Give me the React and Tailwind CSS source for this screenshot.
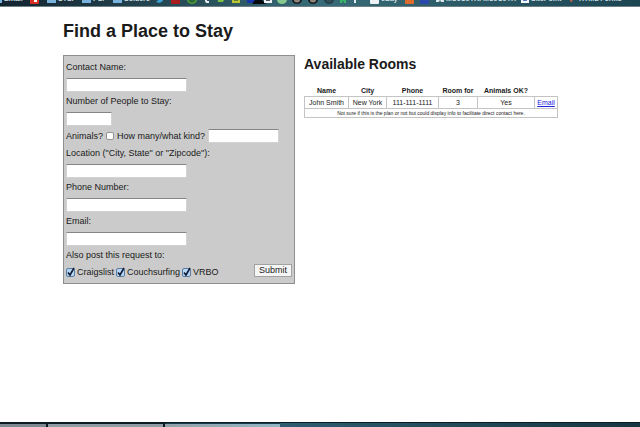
import React from 'react'

const Folder = () => (
    <svg viewBox="0 0 9 8" className="w-[9px] h-[8px] shrink-0">
        <path d="M0 1h3l1 1h5v6H0z" fill="#8fc4e8" />
        <path d="M0 3h9v5H0z" fill="#78b2dd" />
    </svg>
)

const Square = ({ color }) => (
    <svg viewBox="0 0 9 9" className="w-[9px] h-[9px] shrink-0">
        <rect width="9" height="9" rx="1" fill={color} />
    </svg>
)

const Frame = ({ color, inner }) => (
    <svg viewBox="0 0 8 8" className="w-[8px] h-[8px] shrink-0">
        <rect width="8" height="8" fill={color} />
        <path d="M2 2h4v4H2z" fill={inner} />
    </svg>
)

const Face = ({ color, inner }) => (
    <svg viewBox="0 0 10 9" className="w-[10px] h-[9px] shrink-0">
        <ellipse cx="5" cy="4.5" rx="5" ry="4.5" fill={color} />
        <ellipse cx="5" cy="5" rx="3" ry="2.5" fill={inner} />
    </svg>
)

const Glyph = ({ d, color }) => (
    <svg viewBox="0 0 8 8" className="w-[8px] h-[8px] shrink-0">
        <path d={d} fill={color} />
    </svg>
)

const bookmarks = [
    { icon: <Folder />, text: 'Email', width: 'w-[37px]' },
    {
        icon: (
            <svg viewBox="0 0 9 9" className="w-[9px] h-[9px] shrink-0">
                <rect width="9" height="9" rx="1" fill="#d92f22" />
                <path d="M2 1h3v4h2v2H4V5H2z" fill="#fff" />
            </svg>
        ),
        width: 'w-[17px]',
    },
    { icon: <Folder />, text: 'STSF', width: 'w-[35px]' },
    { icon: <Folder />, text: 'PSI', width: 'w-[31px]' },
    { icon: <Folder />, text: 'Soldero', width: 'w-[43px]' },
    { icon: <Glyph color="#3aa5dc" d="M0 6c2 0 3-1 2-2L1 1l3 2c0-3 3-3 4-1L7 5c-1 3-5 4-7 1z" />, width: 'w-[15px]' },
    { icon: <Square color="#a81c20" />, width: 'w-[16px]' },
    { icon: <Face color="#4b9a3c" inner="#2c6534" />, width: 'w-[16px]' },
    { icon: <Glyph color="#e8eef0" d="M2 0h2v3h2v1H4v2h2v2H3L2 6z" />, width: 'w-[14px]' },
    { icon: <Glyph color="#7cc142" d="M0 0h8v3L6 7H1z" />, width: 'w-[15px]' },
    { icon: <Frame color="#b9c632" inner="#5e7e38" />, width: 'w-[15px]' },
    {
        icon: (
            <svg viewBox="0 0 20 9" className="w-[20px] h-[9px] shrink-0">
                <path d="M0 1h8v7H0z" fill="#1737a8" />
                <path d="M6 0h9l-1 4 5 5H5l3-4z" fill="#05080c" />
            </svg>
        ),
        width: 'w-[17px]',
    },
    { icon: <Frame color="#edf1f5" inner="#4a565f" />, width: 'w-[13px]' },
    { icon: <Face color="#86c98e" inner="#86c98e" />, width: 'w-[15px]' },
    { icon: <Face color="#151c20" inner="#8f8379" />, width: 'w-[16px]' },
    { icon: <Face color="#151c20" inner="#8f8379" />, width: 'w-[16px]' },
    { icon: <Face color="#25404a" inner="#344f59" />, width: 'w-[15px]' },
    { icon: <Glyph color="#35b565" d="M1 0h6v8H5L4 5 3 8H1z" />, width: 'w-[14px]' },
    { icon: <Glyph color="#e3ebf2" d="M1 0h5l1 2-1 3H3v3H1z" />, width: 'w-[17px]' },
    { icon: <Square color="#eef2f4" />, text: 'eBay', width: 'w-[35px]' },
    { icon: <Square color="#dc6b30" />, width: 'w-[15px]' },
    { icon: <Square color="#2947ad" />, width: 'w-[16px]' },
    { icon: <Glyph color="#d8e4ea" d="M0 0h2v5h1V1h2v4h1V0h2v7H5L4 5 3 7H0z" />, text: 'MUJUJTR. MUJUJTR', width: 'w-[85px]' },
    { icon: <Frame color="#f2f5f9" inner="#5578b8" />, text: 'SitePoint', width: 'w-[48px]' },
    { icon: <Glyph color="#a5574a" d="M1 0h5L3 7H1z" />, text: 'HTML Forms', width: 'w-[60px]' },
]

const BookmarksBar = () => (
    <nav className="flex items-end h-[7px] overflow-hidden pb-0.5 border-b border-[#6d8085] bg-linear-to-r from-[#12242f] via-[#386c78] to-[#1c4552]">
        {bookmarks.map((item, i) => (
            <div key={i} className={`${item.width} h-[10px] -translate-x-[7px] flex items-center gap-0.5 shrink-0 whitespace-nowrap text-[7px] leading-[10px] font-bold text-[#d3dfe4]`}>
                {item.icon}
                {item.text && <span>{item.text}</span>}
            </div>
        ))}
    </nav>
)

const inputStyle = 'h-[14px] px-0.5 bg-white border border-[#d2d2d2] border-t-[#858585] text-[9px]'

const Field = ({ id, label, width = 'w-[121px]' }) => (
    <>
        <label htmlFor={id} className="block h-[17px]">{label}</label>
        <div className="h-[17px] flex items-center">
            <input id={id} type="text" className={`${inputStyle} ${width}`} />
        </div>
    </>
)

const SiteCheck = ({ id, label }) => (
    <div className="flex items-center gap-0.5">
        <span className="relative flex">
            <input
                id={id}
                type="checkbox"
                defaultChecked
                className="peer appearance-none size-[9px] rounded-xs border border-[#5b7ca0] bg-[#b5d7f3]"
            />
            <svg viewBox="0 0 9 10" className="absolute left-0 bottom-0 w-[9px] h-[10px] pointer-events-none hidden peer-checked:block">
                <path d="M2 5.5L4 8l4-7" fill="none" stroke="#101c38" strokeWidth="1.6" />
            </svg>
        </span>
        <label htmlFor={id}>{label}</label>
    </div>
)

const RequestForm = () => (
    <form
        onSubmit={(e) => e.preventDefault()}
        className="w-[232px] shrink-0 px-0.5 pt-[3px] pb-0.5 border border-[#8e8e8e] bg-[#cbcbcb] text-[9px] leading-[17px]"
    >
        <Field id="name" label="Contact Name:" />
        <Field id="people" label="Number of People to Stay:" width="w-[46px]" />
        <div className="h-[18px] flex items-center gap-[3px]">
            <label htmlFor="animals">Animals?</label>
            <input id="animals" type="checkbox" className="appearance-none size-[8px] rounded-xs border border-[#929292] bg-white checked:bg-[#b5d7f3]" />
            <label htmlFor="kind">How many/what kind?</label>
            <input id="kind" type="text" className={`${inputStyle} w-[71px]`} />
        </div>
        <Field id="location" label={'Location ("City, State" or "Zipcode"):'} />
        <Field id="phone" label="Phone Number:" />
        <Field id="email" label="Email:" />
        <p className="h-[17px]">Also post this request to:</p>
        <div className="h-[17px] flex items-center justify-between">
            <div className="flex gap-0.5">
                <SiteCheck id="craigslist" label="Craigslist" />
                <SiteCheck id="couchsurfing" label="Couchsurfing" />
                <SiteCheck id="vrbo" label="VRBO" />
            </div>
            <button type="submit" className="self-start h-[13px] px-1 leading-[11px] border border-[#a2a2a2] bg-[#f5f5f5]">Submit</button>
        </div>
    </form>
)

const rooms = [
    { name: 'John Smith', city: 'New York', phone: '111-111-1111', room: '3', animals: 'Yes' },
]

const cell = 'border border-[#c4c4c4]'

const AvailableRooms = () => (
    <section>
        <h2 className="text-[14px] leading-[18px] font-bold mb-3">Available Rooms</h2>
        <table className="w-[254px] border-collapse text-center text-[7px] leading-[11px]">
            <thead>
                <tr>
                    <th className="w-[44px]">Name</th>
                    <th className="w-[38px]">City</th>
                    <th className="w-[52px]">Phone</th>
                    <th className="w-[39px]">Room for</th>
                    <th className="w-[57px]">Animals OK?</th>
                    <td></td>
                </tr>
            </thead>
            <tbody>
                {rooms.map((r) => (
                    <tr key={r.phone}>
                        <td className={cell}>{r.name}</td>
                        <td className={cell}>{r.city}</td>
                        <td className={cell}>{r.phone}</td>
                        <td className={cell}>{r.room}</td>
                        <td className={cell}>{r.animals}</td>
                        <td className={cell}><a href="#email" className="text-[#2222dd] underline">Email</a></td>
                    </tr>
                ))}
                <tr>
                    <td colSpan={6} className={`${cell} text-[5px] leading-[8px]`}>
                        Not sure if this is the plan or not but could display info to facilitate direct contact here.
                    </td>
                </tr>
            </tbody>
        </table>
    </section>
)

const Taskbar = () => (
    <footer className="flex h-[5px] border-t border-[#0c1a22] bg-linear-to-r from-[#3f7f96] via-[#2a5a6c] to-[#173641]">
        <div className="w-[48px] border-t border-[#0c1a22] bg-[#7c8a92] border-r-2"></div>
        <div className="w-[117px] border-t border-[#0c1a22] bg-[#8f9ea6] border-r-2"></div>
        <div className="w-[115px] border-t border-[#1b3a48] bg-linear-to-r from-[#93a2aa] to-[#8fb6c4]"></div>
    </footer>
)

const App = () => {
    return (
        <div className="min-h-screen flex flex-col bg-white text-[#1a1a1a] font-['Liberation_Sans',Arial,sans-serif]">
            <BookmarksBar />
            <main className="flex-1 px-[63px] pt-3">
                <h1 className="text-[18px] leading-[24px] font-bold mb-3">Find a Place to Stay</h1>
                <div className="flex items-start gap-[9px]">
                    <RequestForm />
                    <AvailableRooms />
                </div>
            </main>
            <Taskbar />
        </div>
    )
}

export default App
